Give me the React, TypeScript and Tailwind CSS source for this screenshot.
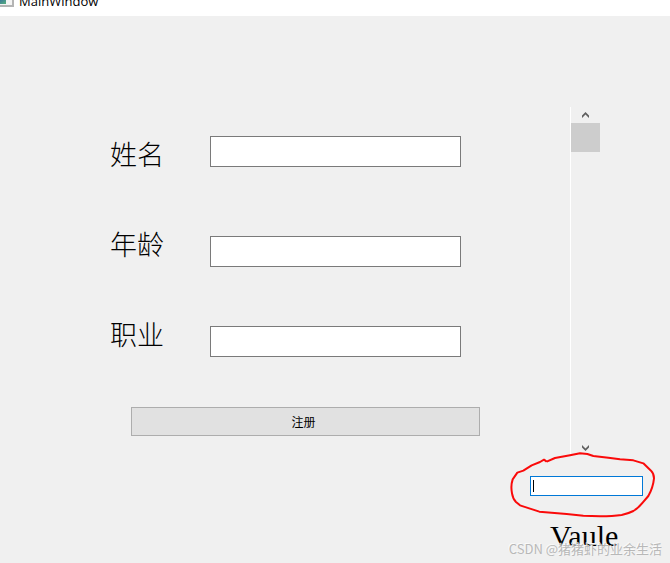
import { useState } from 'react';

const FIELDS = [
  { id: 'name', label: '姓名', gap: '' },
  { id: 'age', label: '年龄', gap: 'mt-[69px]' },
  { id: 'job', label: '职业', gap: 'mt-[59px]' },
];

const STEP = 10;
const MAX = 289;

function TitleBar() {
  return (
    <header className="flex h-4 items-start overflow-hidden bg-white">
      <svg width="14" height="7" viewBox="0 0 14 7" className="shrink-0">
        <defs>
          <linearGradient id="app-icon" x1="0" y1="0" x2="1" y2="1">
            <stop offset="0" stopColor="#3c7a9a" />
            <stop offset="1" stopColor="#55b07c" />
          </linearGradient>
        </defs>
        <rect width="14" height="7" fill="#b4b4b4" />
        <rect width="12" height="5" fill="#f4f4f4" />
        <rect width="6" height="4" fill="url(#app-icon)" />
      </svg>
      <h1 className="-mt-[7px] ml-[5px] font-['Open_Sans',sans-serif] text-[13px] leading-4 text-black">
        MainWindow
      </h1>
    </header>
  );
}

function Arrow({ down }: { down?: boolean }) {
  return (
    <svg width="7" height="6" viewBox="0 0 7 6" className={down ? 'rotate-180' : ''}>
      <path d="M0 3.5L3.5 0L7 3.5V6L3.5 2.6L0 6Z" fill="#606060" />
    </svg>
  );
}

function ScrollBar({ value, onChange }: { value: number; onChange: (v: number) => void }) {
  return (
    <div className="ml-10 flex h-[349px] w-[30px] flex-col border-l border-white">
      <button
        type="button"
        aria-label="Scroll up"
        onClick={() => onChange(Math.max(0, value - STEP))}
        className="flex h-4 items-center justify-center"
      >
        <Arrow />
      </button>
      <div className="flex-1">
        <div className="h-[29px] bg-[#cdcdcd]" style={{ marginTop: value }} />
      </div>
      <button
        type="button"
        aria-label="Scroll down"
        onClick={() => onChange(Math.min(MAX, value + STEP))}
        className="flex h-4 items-center justify-center"
      >
        <Arrow down />
      </button>
    </div>
  );
}

function ValueBox() {
  return (
    <div className="relative mt-5 mr-[27px]">
      <input
        id="value"
        className="block h-5 w-full border border-[#0078d7] bg-white px-1 text-[12px] caret-transparent outline-none"
      />
      <span className="pointer-events-none absolute top-1 left-[3px] h-3 w-px bg-black" />
      {/* hand drawn marker round the box */}
      <svg
        width="170"
        height="84"
        viewBox="0 0 510 252"
        className="pointer-events-none absolute -top-9 -left-[30px] max-w-none"
      >
        <path
          d="M140 65L132 59L120 66L95 76L70 92L52 98L38 118C34 130 33 145 36 160C38 172 40 178 48 186L60 196L90 206L118 215L200 222L250 227L300 229C330 229 345 228 365 225C380 222 390 218 400 213C412 206 420 198 428 188L445 168C454 152 460 135 462 115C462 105 460 99 453 92L430 70L400 61L360 58L325 53L280 48L262 42L240 40L210 46L165 54L140 65"
          fill="none"
          stroke="#fa0a0a"
          strokeWidth="6"
          strokeLinejoin="round"
        />
      </svg>
    </div>
  );
}

export default function App() {
  const [value, setValue] = useState(0);

  return (
    <div className="relative min-h-screen overflow-hidden bg-[#f0f0f0] font-['Noto_Sans_CJK_SC',sans-serif] text-black">
      <TitleBar />
      <main className="flex pt-[91px] pl-[110px]">
        <form className="mr-[50px] min-w-0 flex-1 pt-[29px]" onSubmit={e => e.preventDefault()}>
          <div className="flex">
            <div className="flex w-[100px] shrink-0 flex-col gap-[54px]">
              {FIELDS.map(f => (
                <label key={f.id} htmlFor={f.id} className="text-[27px] leading-9 font-light">
                  {f.label}
                </label>
              ))}
            </div>
            <div className="mr-[19px] min-w-0 flex-1">
              {FIELDS.map(f => (
                <div key={f.id} className={f.gap}>
                  <input
                    id={f.id}
                    className="block h-[31px] w-full border border-[#7a7a7a] bg-white px-1 text-[12px] outline-none"
                  />
                </div>
              ))}
            </div>
          </div>
          <button
            type="submit"
            className="mt-[50px] ml-[21px] block h-[29px] w-[calc(100%-21px)] border border-[#adadad] bg-[#e1e1e1] pr-1 text-[12px]"
          >
            注册
          </button>
        </form>

        <aside className="w-[140px] shrink-0">
          <ScrollBar value={value} onChange={setValue} />
          <ValueBox />
          <label
            htmlFor="value"
            className="mt-6 ml-5 block font-['Liberation_Serif',serif] text-[30px] leading-8"
          >
            Vaule
          </label>
        </aside>
      </main>
      <p className="pointer-events-none absolute right-2 bottom-1 text-[13px] leading-5 text-[#b8b8b8] [text-shadow:-1px_-1px_0_#fafafa]">
        CSDN @猪猪虾的业余生活
      </p>
    </div>
  );
}
